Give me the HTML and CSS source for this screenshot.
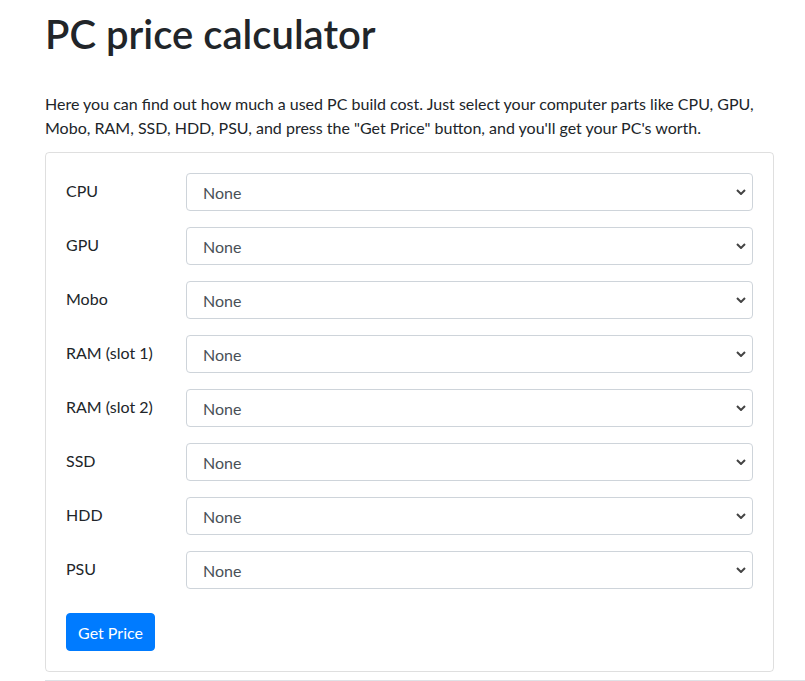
FILE: index.html
```html
<!DOCTYPE html>
<html lang="en">
<head>
    <meta charset="UTF-8">
    <meta name="viewport" content="width=device-width, initial-scale=1.0">
    <title>PC price calculator</title>
    <link rel="stylesheet" href="styles.css">
</head>
<body>
    <div class="container">
        <h1 class="title">PC price calculator</h1>
        <p class="intro">Here you can find out how much a used PC build cost. Just select your computer parts like CPU, GPU, Mobo, RAM, SSD, HDD, PSU, and press the "Get Price" button, and you'll get your PC's worth.</p>

        <div class="card">
            <form class="card-body">
                <div class="form-row">
                    <label for="cpu">CPU</label>
                    <select id="cpu" class="form-select"><option>None</option></select>
                </div>
                <div class="form-row">
                    <label for="gpu">GPU</label>
                    <select id="gpu" class="form-select"><option>None</option></select>
                </div>
                <div class="form-row">
                    <label for="mobo">Mobo</label>
                    <select id="mobo" class="form-select"><option>None</option></select>
                </div>
                <div class="form-row">
                    <label for="ram1">RAM (slot 1)</label>
                    <select id="ram1" class="form-select"><option>None</option></select>
                </div>
                <div class="form-row">
                    <label for="ram2">RAM (slot 2)</label>
                    <select id="ram2" class="form-select"><option>None</option></select>
                </div>
                <div class="form-row">
                    <label for="ssd">SSD</label>
                    <select id="ssd" class="form-select"><option>None</option></select>
                </div>
                <div class="form-row">
                    <label for="hdd">HDD</label>
                    <select id="hdd" class="form-select"><option>None</option></select>
                </div>
                <div class="form-row">
                    <label for="psu">PSU</label>
                    <select id="psu" class="form-select"><option>None</option></select>
                </div>
                <button type="button" class="btn-primary">Get Price</button>
            </form>
        </div>
        <hr class="divider">
    </div>
</body>
</html>
```

FILE: styles.css
```css
/* Global Reset */
* {
    margin: 0;
    padding: 0;
    box-sizing: border-box;
}

body {
    font-family: Lato, "Open Sans", sans-serif;
    font-size: 16px;
    line-height: 1.5;
    color: #212529;
    background-color: #fff;
}

.container {
    padding: 10px 0 0 45px;
}

.title {
    font-size: 40px;
    font-weight: 600;
    line-height: 1.2;
    margin-bottom: 34px;
}

.intro {
    width: 740px;
    margin-bottom: 12px;
}

.card {
    width: 729px;
    border: 1px solid rgba(0, 0, 0, 0.125);
    border-radius: 4px;
}

.card-body {
    padding: 20px;
}

.form-row {
    display: grid;
    grid-template-columns: 120px 1fr;
    align-items: center;
    margin-bottom: 16px;
}

.form-row label {
    color: #212529;
    padding-bottom: 2px;
}

.form-select {
    height: 38px;
    width: 100%;
    padding: 0 30px 0 16px;
    font-family: inherit;
    font-size: 16px;
    color: #495057;
    background-color: #fff;
    border: 1px solid #ced4da;
    border-radius: 4px;
    appearance: none;
    -webkit-appearance: none;
    background-image: url("data:image/svg+xml,%3Csvg xmlns='http://www.w3.org/2000/svg' width='10' height='6' viewBox='0 0 10 6'%3E%3Cpath d='M1 1l4 4 4-4' fill='none' stroke='%23444' stroke-width='2'/%3E%3C/svg%3E");
    background-repeat: no-repeat;
    background-position: right 6px center;
    background-size: 10px 6px;
}

.btn-primary {
    margin-top: 8px;
    height: 38px;
    width: 89px;
    font-family: inherit;
    font-size: 16px;
    color: #fff;
    background-color: #007bff;
    border: 1px solid #007bff;
    border-radius: 4px;
    cursor: pointer;
}

.divider {
    border: none;
    border-top: 1px solid #dee2e6;
    margin-top: 8px;
}
```
